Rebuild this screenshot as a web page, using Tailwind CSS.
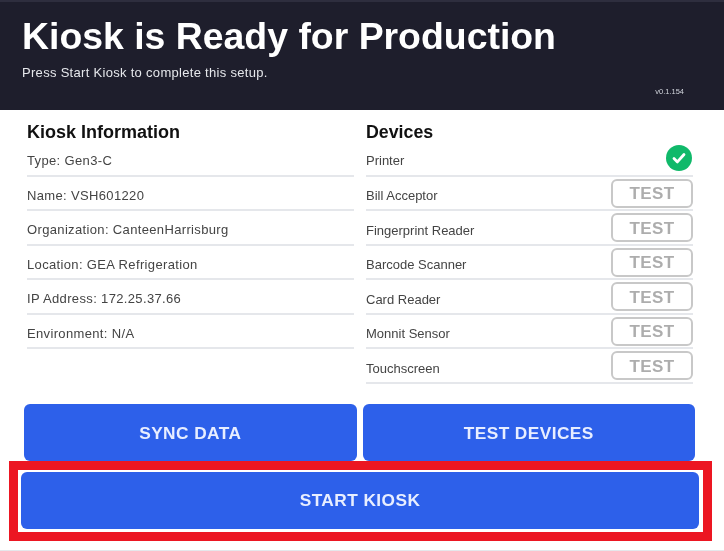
<!DOCTYPE html>
<html lang="en">
<head>
    <meta charset="UTF-8">
    <title>Kiosk is Ready for Production</title>
    <script src="https://cdn.jsdelivr.net/npm/@tailwindcss/browser@4"></script>
</head>
<body class="bg-white font-['Liberation_Sans',sans-serif]">
    <div class="w-[724px] h-[551px] overflow-hidden flex flex-col border-b border-gray-200 blur-[0.5px]">
        <!-- Header -->
        <header class="h-[110px] shrink-0 bg-[#1e1e2c] border-t-2 border-[#2e2e3e] pl-[22px] pr-[40px] flex flex-col">
            <h1 class="mt-[12px] text-[37.4px] leading-[44px] font-bold text-white">Kiosk is Ready for Production</h1>
            <p class="mt-[7px] text-[13px] tracking-[0.3px] leading-[16px] text-gray-200">Press Start Kiosk to complete this setup.</p>
            <p class="mt-[6px] text-right text-[7.5px] leading-[10px] text-gray-300">v0.1.154</p>
        </header>

        <!-- Info and devices -->
        <main class="grid grid-cols-2 gap-x-[12px] pl-[27px] pr-[31px] pt-[11px]">
            <section>
                <h2 class="text-[18px] leading-[22px] font-bold text-[#111]">Kiosk Information</h2>
                <div class="h-[34.5px] -mt-px flex items-center pt-[5px] border-b-2 border-gray-200 text-[13px] tracking-[0.35px] text-[#444]">Type: Gen3-C</div>
                <div class="h-[34.5px] flex items-center pt-[5px] border-b-2 border-gray-200 text-[13px] tracking-[0.35px] text-[#444]">Name: VSH601220</div>
                <div class="h-[34.5px] flex items-center pt-[5px] border-b-2 border-gray-200 text-[13px] tracking-[0.35px] text-[#444]">Organization: CanteenHarrisburg</div>
                <div class="h-[34.5px] flex items-center pt-[5px] border-b-2 border-gray-200 text-[13px] tracking-[0.35px] text-[#444]">Location: GEA Refrigeration</div>
                <div class="h-[34.5px] flex items-center pt-[5px] border-b-2 border-gray-200 text-[13px] tracking-[0.35px] text-[#444]">IP Address: 172.25.37.66</div>
                <div class="h-[34.5px] flex items-center pt-[5px] border-b-2 border-gray-200 text-[13px] tracking-[0.35px] text-[#444]">Environment: N/A</div>
            </section>
            <section>
                <h2 class="text-[17.8px] leading-[22px] font-bold text-[#111]">Devices</h2>
                <div class="h-[34.5px] -mt-px flex items-center justify-between border-b-2 border-gray-200 text-[13px] text-[#444]">
                    <span class="pt-[5px]">Printer</span>
                    <svg class="w-[26px] h-[26px] mr-[1px]" viewBox="0 0 26 26"><circle cx="13" cy="13" r="13" fill="#10b96a"/><path d="M8 13.5l3.4 3.4 6.6-7.4" fill="none" stroke="#fff" stroke-width="2.8" stroke-linecap="round" stroke-linejoin="round"/></svg>
                </div>
                <div class="h-[34.5px] flex items-center justify-between border-b-2 border-gray-200 text-[13px] text-[#444]">
                    <span class="pt-[6px]">Bill Acceptor</span>
                    <span class="w-[82px] h-[29px] mt-[1px] pt-[1px] flex items-center justify-center rounded-md border-2 border-[#c8c8c8] text-[17px] font-bold tracking-wide text-[#adadad]">TEST</span>
                </div>
                <div class="h-[34.5px] flex items-center justify-between border-b-2 border-gray-200 text-[13px] text-[#444]">
                    <span class="pt-[6px]">Fingerprint Reader</span>
                    <span class="w-[82px] h-[29px] mt-[1px] pt-[1px] flex items-center justify-center rounded-md border-2 border-[#c8c8c8] text-[17px] font-bold tracking-wide text-[#adadad]">TEST</span>
                </div>
                <div class="h-[34.5px] flex items-center justify-between border-b-2 border-gray-200 text-[13px] text-[#444]">
                    <span class="pt-[6px]">Barcode Scanner</span>
                    <span class="w-[82px] h-[29px] mt-[1px] pt-[1px] flex items-center justify-center rounded-md border-2 border-[#c8c8c8] text-[17px] font-bold tracking-wide text-[#adadad]">TEST</span>
                </div>
                <div class="h-[34.5px] flex items-center justify-between border-b-2 border-gray-200 text-[13px] text-[#444]">
                    <span class="pt-[6px]">Card Reader</span>
                    <span class="w-[82px] h-[29px] mt-[1px] pt-[1px] flex items-center justify-center rounded-md border-2 border-[#c8c8c8] text-[17px] font-bold tracking-wide text-[#adadad]">TEST</span>
                </div>
                <div class="h-[34.5px] flex items-center justify-between border-b-2 border-gray-200 text-[13px] text-[#444]">
                    <span class="pt-[6px]">Monnit Sensor</span>
                    <span class="w-[82px] h-[29px] mt-[1px] pt-[1px] flex items-center justify-center rounded-md border-2 border-[#c8c8c8] text-[17px] font-bold tracking-wide text-[#adadad]">TEST</span>
                </div>
                <div class="h-[34.5px] flex items-center justify-between border-b-2 border-gray-200 text-[13px] text-[#444]">
                    <span class="pt-[6px]">Touchscreen</span>
                    <span class="w-[82px] h-[29px] mt-[1px] pt-[1px] flex items-center justify-center rounded-md border-2 border-[#c8c8c8] text-[17px] font-bold tracking-wide text-[#adadad]">TEST</span>
                </div>
            </section>
        </main>

        <!-- Actions -->
        <div class="mt-[20px] pl-[24px] pr-[29px] grid grid-cols-2 gap-x-[6px]">
            <button class="h-[57px] pt-[3px] rounded-md bg-[#2d60ea] text-[17.3px] font-bold tracking-wide text-[#e8eeff]">SYNC DATA</button>
            <button class="h-[57px] pt-[3px] rounded-md bg-[#2d60ea] text-[17.3px] font-bold tracking-wide text-[#e8eeff]">TEST DEVICES</button>
        </div>

        <!-- Highlighted start button -->
        <div class="ml-[9px] w-[703px] h-[80px] border-[9px] border-[#ec1622] p-[2px] pl-[3px] pr-[4px]">
            <button class="w-full h-[57px] pt-[2px] rounded-md bg-[#2d60ea] text-[17.3px] font-bold tracking-wide text-[#e8eeff]">START KIOSK</button>
        </div>
    </div>
</body>
</html>
